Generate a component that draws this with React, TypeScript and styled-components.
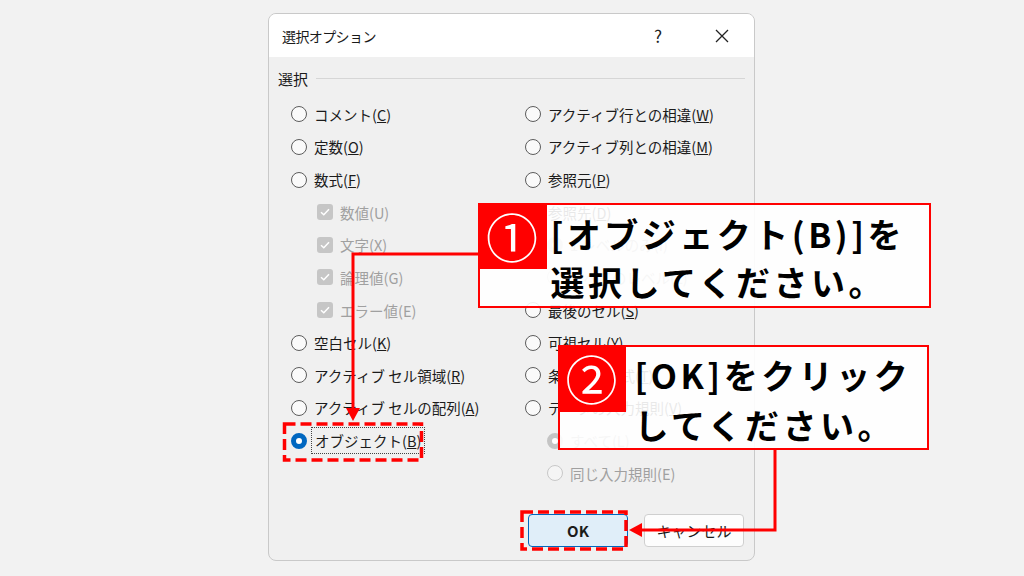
import React from "react";
import styled, { createGlobalStyle } from "styled-components";

const GlobalStyle = createGlobalStyle`
  html, body {
    margin: 0;
    padding: 0;
    background: #f2f2f2;
  }
  body {
    font-family: "Noto Sans CJK JP", "Noto Sans", sans-serif;
  }
`;

const Page = styled.div`
  position: relative;
  width: 1024px;
  height: 576px;
  overflow: hidden;
  padding: 13px 0 0 268px;
  box-sizing: border-box;
`;

const Dialog = styled.div`
  width: 487px;
  height: 548px;
  box-sizing: border-box;
  border: 1px solid #c9c9c9;
  border-radius: 8px;
  background: #f0f0f0;
  display: flex;
  flex-direction: column;
  color: #1b1b1b;
  font-size: 14.5px;
  overflow: hidden;
`;

const TitleBar = styled.div`
  height: 43px;
  background: #ffffff;
  display: flex;
  align-items: center;
  padding: 0 0 0 13px;
`;

const Title = styled.div`
  flex: 1;
  font-size: 14px;
  letter-spacing: -0.6px;
  color: #1a1a1a;
`;

const TitleButton = styled.div`
  width: 64px;
  height: 43px;
  display: flex;
  align-items: center;
  justify-content: center;
  font-size: 17px;
  color: #222;
`;

const GroupHeader = styled.div`
  display: flex;
  align-items: center;
  gap: 8px;
  margin: 12px 9px 0 9px;
  height: 18px;
  font-size: 15px;
`;

const GroupLine = styled.div`
  flex: 1;
  height: 1px;
  background: #d6d6d6;
`;

const Columns = styled.div`
  display: flex;
  margin-top: 11px;
  padding-left: 22px;
`;

const Column = styled.div<{ $width?: number }>`
  display: flex;
  flex-direction: column;
  width: ${(p) => (p.$width ? `${p.$width}px` : "auto")};
`;

const Row = styled.div<{ $indent?: number; $disabled?: boolean }>`
  height: 32.64px;
  display: flex;
  align-items: center;
  gap: 7px;
  padding-left: ${(p) => p.$indent || 0}px;
  color: ${(p) => (p.$disabled ? "#a0a0a0" : "#1b1b1b")};
  white-space: nowrap;
`;

const Radio = styled.span<{ $checked?: boolean; $disabled?: boolean }>`
  width: 16px;
  height: 16px;
  box-sizing: border-box;
  border-radius: 50%;
  flex: none;
  border: ${(p) =>
    p.$checked
      ? `5px solid ${p.$disabled ? "#c4c4c4" : "#0067c0"}`
      : `1.5px solid ${p.$disabled ? "#c8c8c8" : "#5c5c5c"}`};
  background: ${(p) => (p.$checked ? "#ffffff" : p.$disabled ? "#f5f5f5" : "#fafafa")};
`;

const CheckBox = styled.span`
  width: 16px;
  height: 16px;
  border-radius: 3px;
  background: #c6c6c6;
  flex: none;
  display: flex;
  align-items: center;
  justify-content: center;
`;

const FocusLabel = styled.span`
  outline: 1px dotted #444;
  outline-offset: 2px;
  padding: 0 1px;
`;

const Footer = styled.div`
  margin-top: auto;
  margin-bottom: 13px;
  display: flex;
  justify-content: flex-end;
  gap: 16px;
  padding-right: 10px;
`;

const Button = styled.div<{ $primary?: boolean }>`
  width: 100px;
  height: 33px;
  box-sizing: border-box;
  border-radius: 4px;
  display: flex;
  align-items: center;
  justify-content: center;
  font-size: 15px;
  background: ${(p) => (p.$primary ? "#e0eef9" : "#fdfdfd")};
  border: 1px solid ${(p) => (p.$primary ? "#0067c0" : "#cfcfcf")};
  color: #1b1b1b;
  font-weight: ${(p) => (p.$primary ? 600 : 400)};
`;

const Callout = styled.div<{ $x: number; $y: number; $w: number; $h: number }>`
  position: absolute;
  left: ${(p) => p.$x}px;
  top: ${(p) => p.$y}px;
  width: ${(p) => p.$w}px;
  height: ${(p) => p.$h}px;
  box-sizing: border-box;
  border: 2.5px solid #ff0000;
  background: rgba(255, 255, 255, 0.9);
  display: flex;
  align-items: flex-start;
`;

const Badge = styled.div<{ $w: number; $h: number }>`
  width: ${(p) => p.$w}px;
  height: ${(p) => p.$h}px;
  margin: -2.5px 0 0 -2.5px;
  background: #ff0000;
  color: #ffffff;
  flex: none;
  display: flex;
  align-items: center;
  justify-content: center;
  font-size: 52px;
  line-height: 1;
`;

const CalloutText = styled.div<{ $gap: number; $top: number; $lh: number }>`
  padding: ${(p) => p.$top}px 0 0 ${(p) => p.$gap}px;
  font-size: 34px;
  font-weight: 700;
  line-height: ${(p) => p.$lh}px;
  letter-spacing: 3.5px;
  color: #000;
  white-space: nowrap;
`;

const Overlay = styled.svg`
  position: absolute;
  left: 0;
  top: 0;
  pointer-events: none;
`;

type Item = {
  kind: "radio" | "check";
  label: string;
  key?: string;
  indent?: number;
  disabled?: boolean;
  checked?: boolean;
  focus?: boolean;
};

const leftItems: Item[] = [
  { kind: "radio", label: "コメント", key: "C" },
  { kind: "radio", label: "定数", key: "O" },
  { kind: "radio", label: "数式", key: "F" },
  { kind: "check", label: "数値(U)", indent: 26, disabled: true },
  { kind: "check", label: "文字(X)", indent: 26, disabled: true },
  { kind: "check", label: "論理値(G)", indent: 26, disabled: true },
  { kind: "check", label: "エラー値(E)", indent: 26, disabled: true },
  { kind: "radio", label: "空白セル", key: "K" },
  { kind: "radio", label: "アクティブ セル領域", key: "R" },
  { kind: "radio", label: "アクティブ セルの配列", key: "A" },
  { kind: "radio", label: "オブジェクト", key: "B", checked: true, focus: true },
];

const rightItems: Item[] = [
  { kind: "radio", label: "アクティブ行との相違", key: "W" },
  { kind: "radio", label: "アクティブ列との相違", key: "M" },
  { kind: "radio", label: "参照元", key: "P" },
  { kind: "radio", label: "参照先", key: "D" },
  { kind: "radio", label: "1 レベルのみ(I)", indent: 22, disabled: true, checked: true },
  { kind: "radio", label: "すべてのレベル(L)", indent: 22, disabled: true },
  { kind: "radio", label: "最後のセル", key: "S" },
  { kind: "radio", label: "可視セル", key: "Y" },
  { kind: "radio", label: "条件付き書式", key: "T" },
  { kind: "radio", label: "データの入力規則", key: "V" },
  { kind: "radio", label: "すべて(L)", indent: 22, disabled: true, checked: true },
  { kind: "radio", label: "同じ入力規則(E)", indent: 22, disabled: true },
];

const Check = () => (
  <svg width="10" height="8" viewBox="0 0 10 8">
    <path d="M1 4.2 L3.8 6.8 L9 1.2" fill="none" stroke="#fff" strokeWidth="1.5" />
  </svg>
);

const OptionRow = ({ item }: { item: Item }) => {
  const text = item.key ? (
    <>
      {item.label}(<u>{item.key}</u>)
    </>
  ) : (
    item.label
  );
  return (
    <Row $indent={item.indent} $disabled={item.disabled}>
      {item.kind === "radio" ? (
        <Radio $checked={item.checked} $disabled={item.disabled} />
      ) : (
        <CheckBox>
          <Check />
        </CheckBox>
      )}
      {item.focus ? <FocusLabel>{text}</FocusLabel> : <span>{text}</span>}
    </Row>
  );
};

const CloseIcon = () => (
  <svg width="14" height="14" viewBox="0 0 14 14">
    <path d="M1 1 L13 13 M13 1 L1 13" stroke="#222" strokeWidth="1.3" />
  </svg>
);

export default function App() {
  return (
    <Page>
      <GlobalStyle />
      <Dialog>
        <TitleBar>
          <Title>選択オプション</Title>
          <TitleButton>?</TitleButton>
          <TitleButton>
            <CloseIcon />
          </TitleButton>
        </TitleBar>
        <GroupHeader>
          <span>選択</span>
          <GroupLine />
        </GroupHeader>
        <Columns>
          <Column $width={234}>
            {leftItems.map((it, i) => (
              <OptionRow key={i} item={it} />
            ))}
          </Column>
          <Column>
            {rightItems.map((it, i) => (
              <OptionRow key={i} item={it} />
            ))}
          </Column>
        </Columns>
        <Footer>
          <Button $primary>OK</Button>
          <Button>キャンセル</Button>
        </Footer>
      </Dialog>

      <Callout $x={478} $y={203} $w={453} $h={105}>
        <Badge $w={69} $h={66}>①</Badge>
        <CalloutText $gap={4} $top={5} $lh={48}>
          [オブジェクト(B)]を
          <br />
          選択してください。
        </CalloutText>
      </Callout>

      <Callout $x={558} $y={345} $w={371} $h={105}>
        <Badge $w={68} $h={67}>②</Badge>
        <CalloutText $gap={9} $top={3} $lh={50}>
          [OK]をクリック
          <br />
          してください。
        </CalloutText>
      </Callout>

      <Overlay width="1024" height="576" viewBox="0 0 1024 576">
        <g fill="none" stroke="#ff0000" strokeWidth="3">
          <path d="M478 254 H353 V410" />
          <path d="M775 449 V530 H640" />
          <rect x="284.5" y="424" width="137" height="36" strokeDasharray="11 5" strokeWidth="3.5" />
          <rect x="522" y="512" width="104" height="37" strokeDasharray="11 5" strokeWidth="3.5" />
        </g>
        <g fill="#ff0000">
          <path d="M346 408 L360 408 L353 421 Z" />
          <path d="M642 523 L642 537 L629 530 Z" />
        </g>
      </Overlay>
    </Page>
  );
}
